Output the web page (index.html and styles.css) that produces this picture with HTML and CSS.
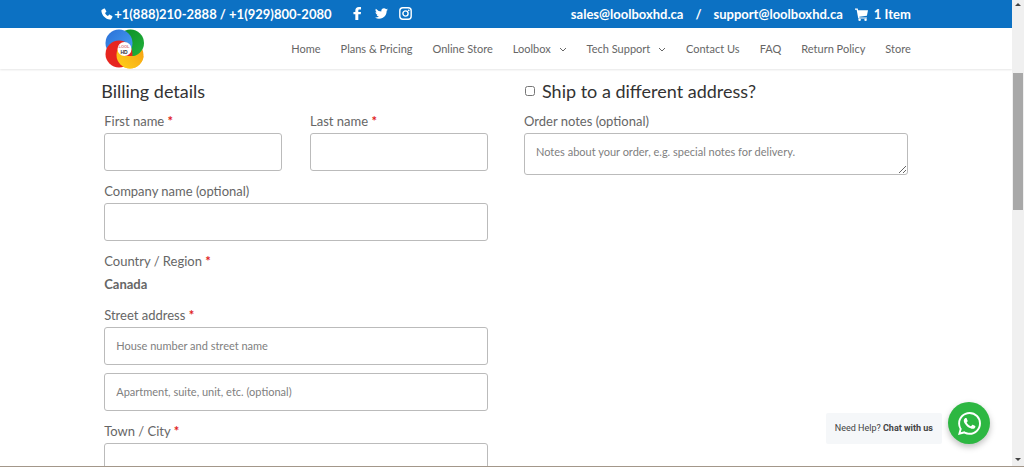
FILE: index.html
```html
<!DOCTYPE html>
<html lang="en">
  <head>
    <title>Checkout - Loolbox HD</title>
    <meta charset="UTF-8" />
    <meta name="viewport" content="width=device-width" />
    <link rel="stylesheet" href="styles.css">
  </head>
  <body>
    <div class="page">
      <div class="top-bar">
        <div class="wrap top-inner">
          <a href="tel:+18882102888" class="phone">
            <svg class="icon-phone" viewBox="0 0 24 24"><path d="M6.2 1.2 1.8 3.4C.8 4 .6 5 .8 6.400 2 15 9 22 17.600 23.200c1.400.2 2.400 0 3-1l2.200-4.400c.3-.7.1-1.300-.5-1.700l-4.800-2.700c-.6-.3-1.200-.2-1.600.3l-1.900 2.300C11 14.600 9.400 13 8 10l2.300-1.900c.5-.4.6-1 .3-1.600L7.900 1.700c-.4-.6-1-.8-1.700-.5z"/></svg>
            <span>+1(888)210-2888 / +1(929)800-2080</span>
          </a>
          <div class="social">
            <a href="#" aria-label="Facebook"><svg class="icon" viewBox="0 0 24 24"><path d="M8 24V13.500H4.500V9H8V6.500C8 2.200 10.400 0 14.500 0H18.500v4.500h-2.700C13.800 4.500 13.500 5.400 13.500 7v2h5L18 13.500h-4.500V24z"/></svg></a>
            <a href="#" aria-label="Twitter"><svg class="icon" viewBox="0 0 24 24"><path d="M24 4.600a10 10 0 0 1-2.800.8 4.900 4.900 0 0 0 2.100-2.700 9.900 9.900 0 0 1-3.100 1.200 4.900 4.900 0 0 0-8.400 4.500A14 14 0 0 1 1.700 3.200a4.900 4.900 0 0 0 1.500 6.500 4.900 4.900 0 0 1-2.200-.6c0 2.300 1.600 4.400 3.900 4.900a5 5 0 0 1-2.200.1 4.900 4.900 0 0 0 4.600 3.400A9.900 9.900 0 0 1 0 19.500 14 14 0 0 0 21.500 7.100 10 10 0 0 0 24 4.600z"/></svg></a>
            <a href="#" aria-label="Instagram"><svg class="icon" viewBox="0 0 24 24"><rect x="1.500" y="1.500" width="21" height="21" rx="5.500" fill="none" stroke="#fff" stroke-width="2.600"/><circle cx="12" cy="12" r="4.800" fill="none" stroke="#fff" stroke-width="2.600"/><circle cx="18" cy="6" r="1.600"/></svg></a>
          </div>
          <div class="top-right">
            <a href="mailto:sales@loolboxhd.ca">sales@loolboxhd.ca</a>
            <span>/</span>
            <a href="mailto:support@loolboxhd.ca">support@loolboxhd.ca</a>
            <a href="#" class="cart">
              <svg class="icon" viewBox="0 0 24 24"><path d="M0 1h5l.7 3H24l-2 10.500L7.800 16l.4 1.500H22v2H6L3 3H0z"/><circle cx="8.500" cy="21.500" r="2.300"/><circle cx="19.500" cy="21.500" r="2.300"/></svg>
              <span>1 Item</span>
            </a>
          </div>
        </div>
      </div>

      <header class="header">
        <div class="wrap header-inner">
          <a href="#" class="logo" aria-label="Loolbox HD">
            <svg viewBox="0 0 40 40">
              <defs>
                <linearGradient id="blue" x1="0" y1="0" x2="1" y2="1"><stop offset="0" stop-color="#2a6fd6"/><stop offset="1" stop-color="#4aa3f5"/></linearGradient>
                <linearGradient id="green" x1="0" y1="0" x2="1" y2="1"><stop offset="0" stop-color="#0b8a24"/><stop offset="1" stop-color="#22b33c"/></linearGradient>
                <linearGradient id="yellow" x1="1" y1="0" x2="0" y2="1"><stop offset="0" stop-color="#f59a12"/><stop offset="1" stop-color="#ffd21a"/></linearGradient>
                <clipPath id="lower"><path d="M0 20H19V27H40V40H0z"/></clipPath>
              </defs>
              <circle cx="25" cy="26" r="13.500" fill="url(#yellow)"/>
              <circle cx="25.500" cy="14" r="13.500" fill="url(#green)"/>
              <circle cx="14" cy="14" r="13.500" fill="url(#blue)"/>
              <circle cx="14" cy="25" r="13.500" fill="#e6251f"/>
              <circle cx="25" cy="26" r="13.500" fill="url(#yellow)" clip-path="url(#lower)"/>
              <circle cx="19.500" cy="20" r="7" fill="#fff"/>
              <text x="19" y="19" class="logo-top">LOOL</text>
              <text x="19" y="25" class="logo-hd">HD</text>
            </svg>
          </a>
          <nav class="nav">
            <a href="#">Home</a>
            <a href="#">Plans &amp; Pricing</a>
            <a href="#">Online Store</a>
            <a href="#">Loolbox <svg class="arrow" viewBox="0 0 8 8"><path d="M1 3l3 3 3-3"/></svg></a>
            <a href="#">Tech Support <svg class="arrow" viewBox="0 0 8 8"><path d="M1 3l3 3 3-3"/></svg></a>
            <a href="#">Contact Us</a>
            <a href="#">FAQ</a>
            <a href="#">Return Policy</a>
            <a href="#">Store</a>
          </nav>
        </div>
      </header>

      <form class="wrap checkout">
        <div class="col">
          <h3>Billing details</h3>
          <div class="fields">
            <div class="row">
              <div class="field">
                <label for="first">First name <span class="required">*</span></label>
                <input type="text" id="first" />
              </div>
              <div class="field">
                <label for="last">Last name <span class="required">*</span></label>
                <input type="text" id="last" />
              </div>
            </div>
            <div class="field">
              <label for="company">Company name (optional)</label>
              <input type="text" id="company" />
            </div>
            <div class="field">
              <span class="label">Country / Region <span class="required">*</span></span>
              <strong>Canada</strong>
            </div>
            <div class="field">
              <label for="street">Street address <span class="required">*</span></label>
              <input type="text" id="street" placeholder="House number and street name" />
            </div>
            <input type="text" aria-label="Apartment" placeholder="Apartment, suite, unit, etc. (optional)" />
            <div class="field">
              <label for="city">Town / City <span class="required">*</span></label>
              <input type="text" id="city" />
            </div>
          </div>
        </div>
        <div class="col">
          <h3 class="ship">
            <input type="checkbox" id="ship" />
            <label for="ship">Ship to a different address?</label>
          </h3>
          <div class="fields">
            <div class="field">
              <label for="notes">Order notes (optional)</label>
              <textarea id="notes" placeholder="Notes about your order, e.g. special notes for delivery."></textarea>
            </div>
          </div>
        </div>
      </form>
    </div>

    <div class="scrollbar">
      <span class="up"></span>
      <div class="thumb"></div>
      <span class="down"></span>
    </div>

    <div class="chat">
      <span class="chat-text">Need Help? <b>Chat with us</b></span>
      <a href="#" class="chat-button" aria-label="WhatsApp">
        <svg viewBox="0 0 24 24"><path d="M.06 24l1.690-6.160a11.870 11.870 0 0 1-1.590-5.950C.16 5.340 5.500 0 12.050 0a11.820 11.820 0 0 1 8.410 3.490 11.820 11.820 0 0 1 3.480 8.410c0 6.560-5.340 11.890-11.890 11.890a11.900 11.900 0 0 1-5.690-1.450L.06 24zm6.600-3.810c1.680 1 3.280 1.590 5.390 1.590 5.450 0 9.890-4.430 9.890-9.880A9.820 9.820 0 0 0 12.060 2C6.600 2 2.170 6.430 2.170 11.880c0 2.220.65 3.890 1.740 5.630l-1 3.650 3.750-.97zm11.390-5.460c-.07-.12-.27-.2-.57-.35-.3-.15-1.760-.87-2.030-.97-.27-.1-.47-.15-.67.15-.2.300-.77.970-.94 1.160-.17.200-.35.220-.64.080-.3-.15-1.260-.46-2.390-1.480a9 9 0 0 1-1.650-2.060c-.17-.3-.02-.46.130-.61.130-.13.300-.35.450-.52.150-.17.200-.3.300-.5.100-.2.050-.37-.03-.52-.08-.15-.67-1.610-.92-2.210-.24-.58-.49-.5-.67-.51l-.57-.01c-.2 0-.52.070-.79.370-.27.300-1.040 1.020-1.040 2.480s1.070 2.880 1.210 3.070c.15.200 2.100 3.200 5.080 4.490.71.310 1.260.490 1.690.630.710.230 1.360.190 1.870.120.570-.09 1.760-.72 2.010-1.410.25-.7.250-1.290.170-1.410z"/></svg>
      </a>
    </div>
  </body>
</html>
```
FILE: styles.css
```css
* {
  box-sizing: border-box;
}

body {
  margin: 0;
  height: 100vh;
  display: flex;
  overflow: hidden;
  background: #fff;
  color: #666;
  font-family: Muli, Lato, sans-serif;
  font-size: 13px;
  border-bottom: 1px solid #a3978a;
}

a {
  color: inherit;
  text-decoration: none;
}

.page {
  flex: 1;
  min-width: 0;
}

.wrap {
  width: 80%;
  margin: 0 auto;
}

/* Top bar */
.top-bar {
  background: #0c71c3;
  color: #fff;
  font-weight: bold;
}

.top-inner {
  display: flex;
  align-items: center;
  height: 28px;
  white-space: nowrap;
}

.phone,
.social,
.top-right,
.cart {
  display: flex;
  align-items: center;
}

.icon {
  display: block;
  width: 13px;
  height: 13px;
  fill: #fff;
}

.icon-phone {
  width: 12px;
  height: 12px;
  margin-right: 1px;
  fill: #fff;
}

.social {
  gap: 11px;
  margin-left: 19px;
  padding-bottom: 2px;
}

.top-right {
  gap: 12px;
  margin-left: auto;
}

.cart {
  gap: 6px;
}

/* Header */
.header {
  box-shadow: 0 1px 2px rgba(0, 0, 0, 0.1);
}

.header-inner {
  display: flex;
  align-items: center;
  justify-content: space-between;
  height: 41px;
}

.logo {
  width: 40px;
  height: 40px;
  margin-left: 4px;
}

.logo-top,
.logo-hd {
  font-family: "Liberation Sans", sans-serif;
  font-weight: bold;
  text-anchor: middle;
}

.logo-top {
  font-size: 4px;
  fill: #d67b7b;
}

.logo-hd {
  font-size: 5px;
  fill: #333;
}

.nav {
  display: flex;
  gap: 20px;
  font-size: 11px;
  white-space: nowrap;
}

.arrow {
  width: 8px;
  height: 8px;
  margin-left: 5px;
  fill: none;
  stroke: #666;
}

/* Checkout form */
.checkout {
  display: grid;
  grid-template-columns: 1fr 1fr;
  gap: 30px;
  padding-top: 12px;
}

h3 {
  margin: 0 0 8px;
  color: #333;
  font-size: 18px;
  font-weight: normal;
  line-height: 20px;
}

.ship {
  display: flex;
  align-items: center;
  gap: 7px;
  padding-left: 4px;
}

.ship input {
  width: 10px;
  height: 10px;
  margin: 0;
}

.fields {
  display: flex;
  flex-direction: column;
  gap: 8px;
  padding: 0 3px;
}

.row {
  display: grid;
  grid-template-columns: 1fr 1fr;
  gap: 28px;
}

.field {
  display: flex;
  flex-direction: column;
}

.field label,
.label {
  line-height: 24px;
}

.field strong {
  line-height: 22px;
}

.required {
  color: #e02020;
  font-weight: bold;
}

input[type="text"],
textarea {
  width: 100%;
  height: 38px;
  padding: 0 11px 2px;
  border: 1px solid #bbb;
  border-radius: 3px;
  background: #fff;
  color: #666;
  font-family: inherit;
  font-size: 11px;
}

textarea {
  display: block;
  height: 42px;
  padding: 11px;
  overflow: hidden;
}

::placeholder {
  color: #808080;
}

/* Window scrollbar */
.scrollbar {
  display: flex;
  flex-direction: column;
  align-items: center;
  width: 12px;
  padding: 3px 1px 5px;
  background: #f0f0f0;
}

.up,
.down {
  border: 3px solid transparent;
}

.up {
  border-top: 0;
  border-bottom-color: #444;
}

.down {
  margin-top: auto;
  border-bottom: 0;
  border-top-color: #444;
}

.thumb {
  width: 100%;
  height: 30%;
  margin-top: 67px;
  background: #a8a8a8;
}

/* WhatsApp chat */
.chat {
  position: fixed;
  right: 34px;
  bottom: 23px;
  display: flex;
  align-items: center;
  gap: 6px;
  font-family: Roboto, sans-serif;
  font-size: 9px;
  color: #444;
}

.chat-text {
  padding: 10px 9px;
  margin-top: 10px;
  line-height: 11px;
  background: #f5f7f9;
  border-radius: 2px;
}

.chat-button {
  display: flex;
  align-items: center;
  justify-content: center;
  width: 42px;
  height: 42px;
  border-radius: 50%;
  background: #2db742;
  box-shadow: 0 3px 6px rgba(0, 0, 0, 0.25);
}

.chat-button svg {
  width: 23px;
  height: 23px;
  fill: #fff;
}
```
